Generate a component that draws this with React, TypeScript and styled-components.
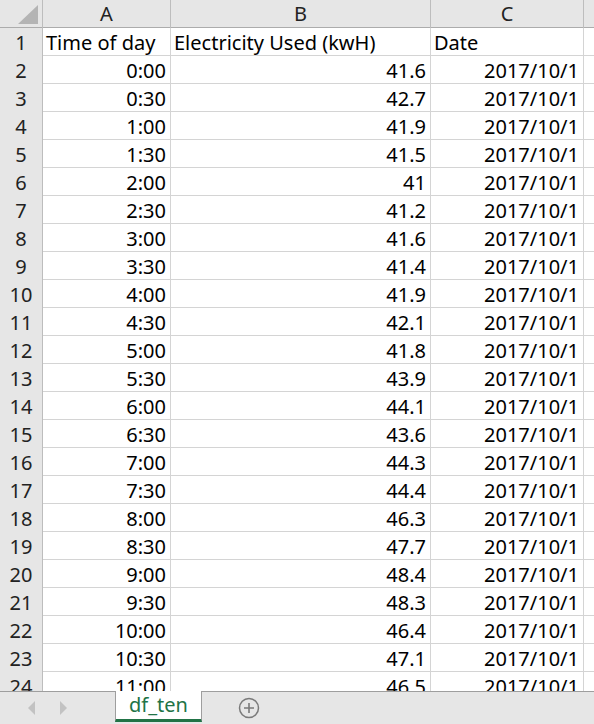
import styled, { createGlobalStyle } from 'styled-components'

const GlobalStyle = createGlobalStyle`
  html, body {
    margin: 0;
    padding: 0;
    background: #ffffff;
  }
  body {
    font-family: "Noto Sans", "Noto Sans CJK SC", sans-serif;
    overflow: hidden;
  }
`

const ROW_HEIGHT = 28
const COLUMNS = '43px 128px 260px 153px 1fr'

const rows = [
  ['0:00', '41.6'],
  ['0:30', '42.7'],
  ['1:00', '41.9'],
  ['1:30', '41.5'],
  ['2:00', '41'],
  ['2:30', '41.2'],
  ['3:00', '41.6'],
  ['3:30', '41.4'],
  ['4:00', '41.9'],
  ['4:30', '42.1'],
  ['5:00', '41.8'],
  ['5:30', '43.9'],
  ['6:00', '44.1'],
  ['6:30', '43.6'],
  ['7:00', '44.3'],
  ['7:30', '44.4'],
  ['8:00', '46.3'],
  ['8:30', '47.7'],
  ['9:00', '48.4'],
  ['9:30', '48.3'],
  ['10:00', '46.4'],
  ['10:30', '47.1'],
  ['11:00', '46.5'],
]

const Window = styled.div`
  width: 594px;
  height: 724px;
  display: flex;
  flex-direction: column;
  overflow: hidden;
`

const Sheet = styled.div`
  height: 691px;
  overflow: hidden;
  flex-shrink: 0;
`

const Row = styled.div<{ $header?: boolean }>`
  display: grid;
  grid-template-columns: ${COLUMNS};
  height: ${ROW_HEIGHT}px;
  background: ${(p) => (p.$header ? '#e6e6e6' : '#ffffff')};
  box-sizing: border-box;
  border-bottom: 1px solid ${(p) => (p.$header ? '#acacac' : '#d4d4d4')};
`

const Cell = styled.div<{ $align?: 'left' | 'right' }>`
  box-sizing: border-box;
  border-right: 1px solid #d4d4d4;
  padding: 0 4px 0 3px;
  font-size: 20px;
  line-height: 30px;
  color: #000;
  white-space: nowrap;
  text-align: ${(p) => p.$align ?? 'left'};
`

const ColHeader = styled.div`
  box-sizing: border-box;
  border-right: 1px solid #bdbdbd;
  font-size: 20px;
  line-height: 28px;
  text-align: center;
  color: #222;
`

const RowHeader = styled.div`
  box-sizing: border-box;
  background: #e6e6e6;
  border-right: 1px solid #bdbdbd;
  font-size: 20px;
  line-height: 30px;
  text-align: center;
  color: #222;
`

const Corner = styled.div`
  box-sizing: border-box;
  border-right: 1px solid #bdbdbd;
  position: relative;

  &::after {
    content: '';
    position: absolute;
    right: 4px;
    bottom: 4px;
    width: 0;
    height: 0;
    border-left: 20px solid transparent;
    border-bottom: 19px solid #b4b4b4;
  }
`

const TabBar = styled.div`
  flex: 1;
  background: #e6e6e6;
  border-top: 1px solid #9e9e9e;
  display: flex;
  align-items: stretch;
`

const NavArrows = styled.div`
  width: 115px;
  display: flex;
  align-items: center;
  padding-left: 28px;
  gap: 25px;
  box-sizing: border-box;
`

const Arrow = styled.span<{ $dir: 'left' | 'right' }>`
  width: 0;
  height: 0;
  border-top: 7px solid transparent;
  border-bottom: 7px solid transparent;
  ${(p) =>
    p.$dir === 'left'
      ? 'border-right: 7px solid #c2c2c2;'
      : 'border-left: 7px solid #c2c2c2;'}
`

const Tab = styled.div`
  width: 87px;
  margin-top: -1px;
  background: #ffffff;
  border-left: 1px solid #9e9e9e;
  border-right: 1px solid #9e9e9e;
  border-bottom: 3px solid #217346;
  box-sizing: border-box;
  color: #217346;
  font-size: 20px;
  line-height: 28px;
  text-align: center;
  margin-bottom: 2px;
`

const AddSheet = styled.div`
  margin-left: 36px;
  display: flex;
  align-items: center;
`

const App = () => {
  return (
    <Window>
      <GlobalStyle />
      <Sheet>
        <Row $header>
          <Corner />
          <ColHeader>A</ColHeader>
          <ColHeader>B</ColHeader>
          <ColHeader>C</ColHeader>
          <div />
        </Row>
        <Row>
          <RowHeader>1</RowHeader>
          <Cell>Time of day</Cell>
          <Cell>Electricity Used (kwH)</Cell>
          <Cell>Date</Cell>
          <div />
        </Row>
        {rows.map(([time, kwh], i) => (
          <Row key={time}>
            <RowHeader>{i + 2}</RowHeader>
            <Cell $align="right">{time}</Cell>
            <Cell $align="right">{kwh}</Cell>
            <Cell $align="right">2017/10/1</Cell>
            <div />
          </Row>
        ))}
      </Sheet>
      <TabBar>
        <NavArrows>
          <Arrow $dir="left" />
          <Arrow $dir="right" />
        </NavArrows>
        <Tab>df_ten</Tab>
        <AddSheet>
          <svg width="22" height="22" viewBox="0 0 22 22">
            <circle cx="11" cy="11" r="9.5" fill="none" stroke="#7a7a7a" strokeWidth="1.5" />
            <path d="M11 6v10M6 11h10" stroke="#7a7a7a" strokeWidth="1.6" />
          </svg>
        </AddSheet>
      </TabBar>
    </Window>
  )
}

export default App
